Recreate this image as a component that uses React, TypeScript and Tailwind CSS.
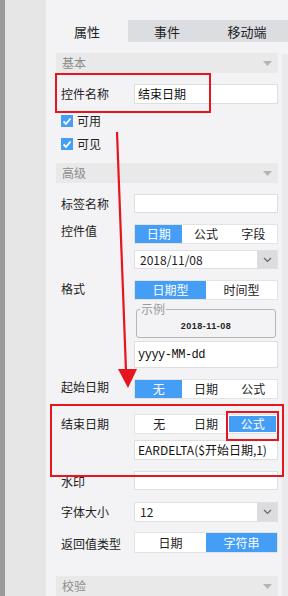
import type { ReactNode } from "react";

const BLUE = "bg-[#459ef5]";

function SectionHeader({ title, className = "" }: { title: string; className?: string }) {
  return (
    <div className={`h-[20px] bg-[#e9e9ea] flex items-center justify-between pl-[6px] pr-[6px] ${className}`}>
      <span className="text-[12px] text-[#8c8c8c]">{title}</span>
      <svg width="9" height="5" viewBox="0 0 9 5">
        <path d="M0 0 H9 L4.5 5 Z" fill="#b4b4b4" />
      </svg>
    </div>
  );
}

function Row({ label, labelH = 20, className = "", children }: { label: string; labelH?: number; className?: string; children: ReactNode }) {
  return (
    <div className={`flex ${className}`}>
      <div className="w-[78px] shrink-0 pl-[5px] flex items-center text-[12px] text-[#222]" style={{ height: labelH }}>
        {label}
      </div>
      <div className="flex-1 min-w-0 flex flex-col">{children}</div>
    </div>
  );
}

function Segmented({ items, active, h = "h-[20px]", inset = false }: { items: string[]; active: number; h?: string; inset?: boolean }) {
  return (
    <div className={`flex ${h} bg-white border border-[#e3e3e3] ${inset ? "p-[1px]" : ""}`}>
      {items.map((it, i) => (
        <div
          key={it}
          className={`flex-1 flex items-center justify-center text-[12px] ${
            i === active ? `${BLUE} text-white` : "text-[#222]"
          }`}
        >
          {it}
        </div>
      ))}
    </div>
  );
}

function Select({ value, h = "h-[19px]" }: { value: string; h?: string }) {
  return (
    <div className={`flex ${h} bg-white border border-[#e0e0e0]`}>
      <div className="flex-1 flex items-center pl-[5px] text-[12px] text-[#222]">{value}</div>
      <div className="w-[20px] bg-[#dcdcde] flex items-center justify-center">
        <svg width="9" height="6" viewBox="0 0 9 6">
          <path d="M1 1 L4.5 4.5 L8 1" stroke="#666" strokeWidth="1.2" fill="none" />
        </svg>
      </div>
    </div>
  );
}

function Input({ value = "", h = "h-[20px]", mono = false }: { value?: string; h?: string; mono?: boolean }) {
  return (
    <div
      className={`${h} bg-white border border-[#dedede] flex items-center pl-[3px] text-[12px] text-[#111] whitespace-nowrap overflow-hidden ${
        mono ? "font-['Liberation_Mono',monospace] tracking-[-0.5px]" : ""
      }`}
    >
      {value}
    </div>
  );
}

function Check({ label, className = "" }: { label: string; className?: string }) {
  return (
    <div className={`h-[20px] flex items-center pl-[5px] gap-[4px] ${className}`}>
      <div className={`w-[12px] h-[12px] ${BLUE} flex items-center justify-center`}>
        <svg width="10" height="9" viewBox="0 0 10 9">
          <path d="M1.5 4.5 L4 7 L8.5 1.5" stroke="white" strokeWidth="1.8" fill="none" />
        </svg>
      </div>
      <span className="text-[12px] text-[#222]">{label}</span>
    </div>
  );
}

export default function App() {
  return (
    <div className="w-[288px] h-[596px] flex overflow-hidden font-['Noto_Sans_CJK_SC','Noto_Sans',sans-serif] leading-none">
      <div className="w-[5px] bg-[#9b9b9b]" />
      <div className="w-[41px] bg-[#e6e6e6]" />
      <div className="flex-1 bg-[#f3f3f5] relative flex flex-col">
        <div className="h-[21px]" />
        {/* Tabs */}
        <div className="h-[23px] flex text-[13px] text-[#222]">
          <div className="w-[82px] flex items-center justify-center">属性</div>
          <div className="w-[78px] flex items-center justify-center bg-[#dcdde0]">事件</div>
          <div className="flex-1 flex items-center justify-center bg-[#dcdde0]">移动端</div>
        </div>

        <div className="flex flex-1">
          <div className="w-[222px] shrink-0 ml-[10px] flex flex-col">
            <SectionHeader title="基本" className="mt-[11px]" />
            <Row label="控件名称" className="mt-[11px]">
              <Input value="结束日期" />
            </Row>
            <Check label="可用" className="mt-[7px]" />
            <Check label="可见" className="mt-[3px]" />

            <SectionHeader title="高级" className="mt-[9px]" />
            <Row label="标签名称" labelH={19} className="mt-[11px]">
              <Input h="h-[19px]" />
            </Row>
            <Row label="控件值" labelH={14} className="mt-[11px]">
              <Segmented items={["日期", "公式", "字段"]} active={0} />
              <div className="mt-[6px]">
                <Select value="2018/11/08" />
              </div>
            </Row>
            <Row label="格式" labelH={17} className="mt-[11px]">
              <Segmented items={["日期型", "时间型"]} active={0} />
              <fieldset className="mt-[3px] mx-[2px] h-[35px] border border-[#b5b5b5] rounded-[3px] px-[3px] pb-0 pt-0">
                <legend className="text-[12px] text-[#9a9a9a] leading-none px-[1px]">示例</legend>
                <div className="h-[22px] flex items-center justify-center text-[9px] font-bold text-[#222] font-['Liberation_Sans',sans-serif] tracking-[0.5px]">
                  2018-11-08
                </div>
              </fieldset>
              <div className="mt-[3px]">
                <Input value="yyyy-MM-dd" h="h-[27px]" mono />
              </div>
            </Row>
            <Row label="起始日期" labelH={16} className="mt-[11px]">
              <Segmented items={["无", "日期", "公式"]} active={0} />
            </Row>
            <Row label="结束日期" labelH={19} className="mt-[15px]">
              <Segmented items={["无", "日期", "公式"]} active={2} inset />
              <div className="mt-[6px]">
                <Input value="EARDELTA($开始日期,1)" h="h-[20px]" />
              </div>
            </Row>
            <Row label="水印" labelH={21} className="mt-[11px]">
              <Input h="h-[19px]" />
            </Row>
            <Row label="字体大小" className="mt-[10px]">
              <Select value="12" h="h-[20px]" />
            </Row>
            <Row label="返回值类型" labelH={23} className="mt-[10px]">
              <Segmented items={["日期", "字符串"]} active={1} h="h-[21px]" />
            </Row>
            <SectionHeader title="校验" className="mt-[21px]" />
          </div>
          <div className="ml-auto w-[6px] mt-[12px] bg-[#eaeaec] rounded-tl-[3px]" />
        </div>

        {/* annotations */}
        <div className="absolute left-[9px] top-[73px] w-[156px] h-[40px] border-2 border-[#e5161e]" />
        <div className="absolute left-[4px] top-[404px] w-[234px] h-[73px] border-2 border-[#e5161e]" />
        <div className="absolute left-[180px] top-[411px] w-[53px] h-[30px] border-2 border-[#e5161e]" />
        <svg className="absolute left-0 top-0 pointer-events-none" width="242" height="596">
          <path d="M71 132 L80 371" stroke="#e5161e" strokeWidth="2.2" fill="none" />
          <path d="M72 369 L91 369 L82 388 Z" fill="#e5161e" />
        </svg>
      </div>
    </div>
  );
}
